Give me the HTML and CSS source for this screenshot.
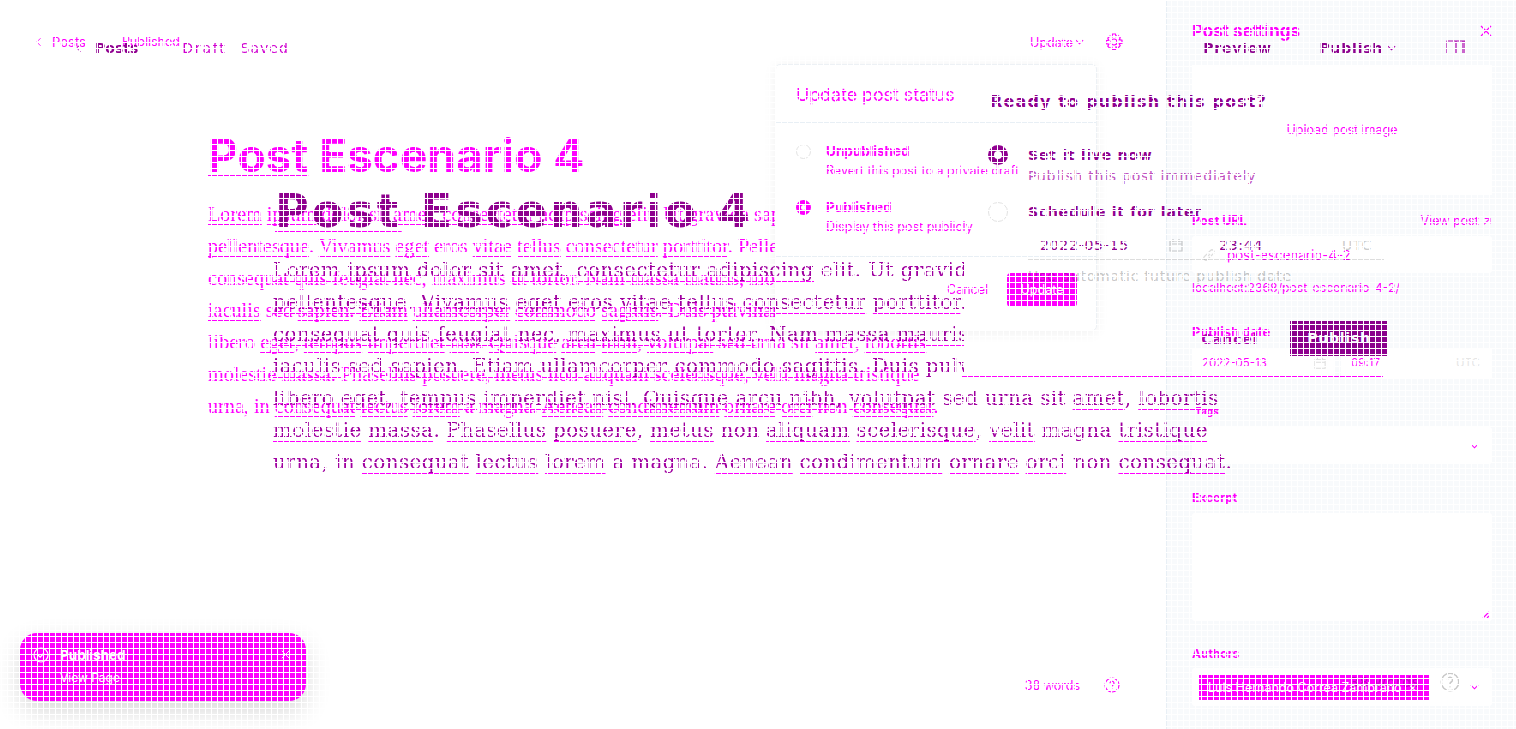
FILE: index.html
```html
<!DOCTYPE html>
<html lang="en">
<head>
    <meta charset="UTF-8">
    <meta name="viewport" content="width=device-width, initial-scale=1.0">
    <title>Post Escenario 4</title>
    <link rel="stylesheet" href="styles.css">
</head>
<body>
    <!-- back layer: settings panel open -->
    <div class="layer layer-a">
        <div class="editor">
            <header class="bar">
                <div class="crumbs">
                    <svg class="ico-back" viewBox="0 0 8 12"><path d="M6 1 1 6l5 5"/></svg>
                    <span class="crumb-link">Posts</span>
                    <span class="crumb-status">Published</span>
                </div>
                <div class="bar-right">
                    <span class="update-link">Update</span>
                    <svg class="ico-chev" viewBox="0 0 10 6"><path d="M1 1l4 4 4-4"/></svg>
                    <svg class="ico-gear" viewBox="0 0 18 18"><circle cx="9" cy="9" r="3"/><path d="M7.500 1h3l.5 2.500 2-1 2.200 2.200-1 2 2.800.5v3l-2.800.5 1 2-2.200 2.200-2-1-.5 2.600h-3L7 14.400l-2 1-2.200-2.200 1-2L1 10.700v-3l2.800-.5-1-2L5 3l2 1z"/></svg>
                </div>
            </header>
            <main class="doc">
                <h1 class="title"><span class="sp">Post</span> Escenario 4</h1>
                <p class="body-text">
                    <span class="sp">Lorem</span> <span class="sp">ipsum</span> dolor sit <span class="sp">amet</span>, <span class="sp">consectetur</span> <span class="sp">adipiscing</span> elit. Ut gravida sapien vitae mi<br>
                    <span class="sp">pellentesque</span>. <span class="sp">Vivamus</span> <span class="sp">eget</span> eros <span class="sp">vitae</span> <span class="sp">tellus</span> <span class="sp">consectetur</span> <span class="sp">porttitor</span>. Pellentesque<br>
                    <span class="sp">consequat</span> quis <span class="sp">feugiat</span> nec, <span class="sp">maximus</span> ut <span class="sp">tortor</span>. Nam massa <span class="sp">mauris</span>, mollis in<br>
                    <span class="sp">iaculis</span> sed <span class="sp">sapien</span>. <span class="sp">Etiam</span> <span class="sp">ullamcorper</span> <span class="sp">commodo</span> <span class="sp">sagittis</span>. Duis pulvinar<br>
                    libero <span class="sp">eget</span>, <span class="sp">tempus</span> <span class="sp">imperdiet</span> <span class="sp">nisl</span>. <span class="sp">Quisque</span> <span class="sp">arcu</span> <span class="sp">nibh</span>, <span class="sp">volutpat</span> sed urna sit <span class="sp">amet</span>, <span class="sp">lobortis</span><br>
                    <span class="sp">molestie</span> <span class="sp">massa</span>. <span class="sp">Phasellus</span> <span class="sp">posuere</span>, <span class="sp">metus</span> non <span class="sp">aliquam</span> <span class="sp">scelerisque</span>, <span class="sp">velit</span> magna <span class="sp">tristique</span><br>
                    urna, in <span class="sp">consequat</span> <span class="sp">lectus</span> <span class="sp">lorem</span> a magna. <span class="sp">Aenean</span> <span class="sp">condimentum</span> <span class="sp">ornare</span> <span class="sp">orci</span> non <span class="sp">consequat</span>.
                </p>
            </main>
            <footer class="words">
                <span>38 words</span>
                <svg class="ico-help" viewBox="0 0 16 16"><circle cx="8" cy="8" r="7"/><path d="M6 6.200a2 2 0 1 1 3 1.800c-.7.400-1 .8-1 1.500M8 11.600v.5"/></svg>
            </footer>
        </div>

        <aside class="panel">
            <div class="panel-head">
                <span class="panel-title">Post settings</span>
                <svg class="ico-x" viewBox="0 0 12 12"><path d="M1 1l10 10M11 1 1 11"/></svg>
            </div>
            <div class="image-box"><span class="image-btn">Upload post image</span></div>

            <div class="label-row url-label"><label>Post URL</label><span class="view-post">View post ↗</span></div>
            <div class="field url-field">
                <svg class="ico-link" viewBox="0 0 14 14"><path d="M6 8l2-2M5 6 2.500 8.500a2 2 0 0 0 3 3L8 9M9 8l2.500-2.500a2 2 0 0 0-3-3L6 5"/></svg>
                <span>post-escenario-4-2</span>
            </div>
            <div class="hint">localhost:2368/post-escenario-4-2/</div>

            <label class="date-label">Publish date</label>
            <div class="date-row">
                <div class="date-part">
                    <span>2022-05-13</span>
                    <svg class="ico-cal" viewBox="0 0 14 14"><path d="M1 3h12v10H1zM1 6h12M4 1v3M10 1v3"/></svg>
                </div>
                <div class="date-part time-part"><span>09:17</span><span class="utc">UTC</span></div>
            </div>

            <label class="tags-label">Tags</label>
            <div class="field tags-field"><svg class="ico-chev" viewBox="0 0 10 6"><path d="M1 1l4 4 4-4"/></svg></div>

            <label class="excerpt-label">Excerpt</label>
            <div class="field excerpt-field"><svg class="ico-grip" viewBox="0 0 8 8"><path d="M1 7l6-6M5 7l2-2"/></svg></div>

            <label class="authors-label">Authors</label>
            <div class="field authors-field">
                <span class="token">Luis Hernando Correa Zambrano &nbsp;×</span>
                <svg class="ico-chev" viewBox="0 0 10 6"><path d="M1 1l4 4 4-4"/></svg>
            </div>
        </aside>

        <div class="status-pop">
            <div class="status-head">Update post status</div>
            <div class="status-list">
                <div class="status-opt">
                    <span class="radio"></span>
                    <div><strong>Unpublished</strong><small>Revert this post to a private draft</small></div>
                </div>
                <div class="status-opt">
                    <span class="radio on"></span>
                    <div><strong>Published</strong><small>Display this post publicly</small></div>
                </div>
            </div>
            <div class="status-foot">
                <span class="foot-cancel">Cancel</span>
                <span class="foot-update">Update</span>
            </div>
        </div>

        <div class="toast">
            <svg class="ico-ok" viewBox="0 0 16 16"><circle cx="8" cy="8" r="7"/><path d="M5 8l2.200 2.200L11 6"/></svg>
            <div class="toast-text"><strong>Published</strong><span>View Page</span></div>
            <svg class="ico-x" viewBox="0 0 12 12"><path d="M1 1l10 10M11 1 1 11"/></svg>
        </div>
    </div>

    <!-- front layer: publish menu open, blended over the back one -->
    <div class="layer layer-b">
        <div class="editor">
            <header class="bar">
                <div class="crumbs">
                    <svg class="ico-back" viewBox="0 0 8 12"><path d="M6 1 1 6l5 5"/></svg>
                    <span class="crumb-link">Posts</span>
                    <span class="crumb-status">Draft</span>
                    <span class="crumb-saved">Saved</span>
                </div>
                <div class="bar-right">
                    <span class="preview-link">Preview</span>
                    <span class="publish-link">Publish</span>
                    <svg class="ico-chev" viewBox="0 0 10 6"><path d="M1 1l4 4 4-4"/></svg>
                    <svg class="ico-side" viewBox="0 0 20 14"><path d="M1 13V1h18v12M10 1v12M17 1v12"/></svg>
                </div>
            </header>
            <main class="doc">
                <h1 class="title"><span class="sp">Post</span> Escenario 4</h1>
                <p class="body-text">
                    <span class="sp">Lorem</span> <span class="sp">ipsum</span> dolor sit <span class="sp">amet</span>, <span class="sp">consectetur</span> <span class="sp">adipiscing</span> elit. Ut gravida sapien vitae mi<br>
                    <span class="sp">pellentesque</span>. <span class="sp">Vivamus</span> <span class="sp">eget</span> eros <span class="sp">vitae</span> <span class="sp">tellus</span> <span class="sp">consectetur</span> <span class="sp">porttitor</span>. Pellentesque<br>
                    <span class="sp">consequat</span> quis <span class="sp">feugiat</span> nec, <span class="sp">maximus</span> ut <span class="sp">tortor</span>. Nam massa <span class="sp">mauris</span>, mollis in<br>
                    <span class="sp">iaculis</span> sed <span class="sp">sapien</span>. <span class="sp">Etiam</span> <span class="sp">ullamcorper</span> <span class="sp">commodo</span> <span class="sp">sagittis</span>. Duis pulvinar<br>
                    libero <span class="sp">eget</span>, <span class="sp">tempus</span> <span class="sp">imperdiet</span> <span class="sp">nisl</span>. <span class="sp">Quisque</span> <span class="sp">arcu</span> <span class="sp">nibh</span>, <span class="sp">volutpat</span> sed urna sit <span class="sp">amet</span>, <span class="sp">lobortis</span><br>
                    <span class="sp">molestie</span> <span class="sp">massa</span>. <span class="sp">Phasellus</span> <span class="sp">posuere</span>, <span class="sp">metus</span> non <span class="sp">aliquam</span> <span class="sp">scelerisque</span>, <span class="sp">velit</span> magna <span class="sp">tristique</span><br>
                    urna, in <span class="sp">consequat</span> <span class="sp">lectus</span> <span class="sp">lorem</span> a magna. <span class="sp">Aenean</span> <span class="sp">condimentum</span> <span class="sp">ornare</span> <span class="sp">orci</span> non <span class="sp">consequat</span>.
                </p>
            </main>
            <footer class="words">
                <span>38 words</span>
                <svg class="ico-help" viewBox="0 0 16 16"><circle cx="8" cy="8" r="7"/><path d="M6 6.200a2 2 0 1 1 3 1.800c-.7.400-1 .8-1 1.500M8 11.600v.5"/></svg>
            </footer>
        </div>

        <div class="publish-pop">
            <div class="publish-head">Ready to publish this post?</div>
            <div class="publish-opt">
                <span class="radio on"></span>
                <div><strong>Set it live now</strong><small>Publish this post immediately</small></div>
            </div>
            <div class="publish-opt">
                <span class="radio"></span>
                <div class="sched">
                    <strong>Schedule it for later</strong>
                    <div class="sched-row">
                        <div class="sched-date">
                            <span>2022-05-15</span>
                            <svg class="ico-cal" viewBox="0 0 14 14"><path d="M1 3h12v10H1zM1 6h12M4 1v3M10 1v3"/></svg>
                        </div>
                        <div class="sched-time"><span>23:44</span><span class="utc">UTC</span></div>
                    </div>
                    <small>Use automatic future publish date</small>
                </div>
            </div>
            <div class="publish-foot">
                <span class="foot-cancel">Cancel</span>
                <span class="foot-publish">Publish</span>
            </div>
        </div>
    </div>
</body>
</html>
```

FILE: styles.css
```css
html, body {
    margin: 0;
    height: 100%;
    overflow: hidden;
    background: #fff;
}

/* the white 6px mesh runs over everything */
body::after {
    content: "";
    position: fixed;
    inset: 0;
    z-index: 10;
    pointer-events: none;
    background-image:
        repeating-linear-gradient(to right, transparent 0, transparent 1px, #fff 1px, #fff 2px, transparent 2px, transparent 6px),
        repeating-linear-gradient(to bottom, #fff 0, #fff 1px, transparent 1px, transparent 6px);
}

.layer {
    position: absolute;
    inset: 0;
    display: flex;
    overflow: hidden;
}

.layer svg {
    fill: none;
    stroke: currentColor;
    stroke-width: 1.2;
    flex: none;
}

.editor {
    flex: 1;
    min-width: 0;
    display: flex;
    flex-direction: column;
}

.bar {
    display: flex;
    justify-content: space-between;
    align-items: center;
}

.crumbs, .bar-right, .words {
    display: flex;
    align-items: center;
}

.doc {
    flex: 1;
    min-width: 0;
    white-space: nowrap;
}

.title {
    margin: 0;
}

.body-text {
    margin: 0;
    line-height: 32px;
}

.sp {
    text-decoration: underline;
    text-decoration-color: #f0f;
    text-decoration-thickness: 1px;
    text-decoration-skip-ink: none;
}

.radio {
    display: block;
    flex: none;
    box-sizing: border-box;
    border-radius: 50%;
    border: 1px solid #e3e3e3;
}

strong, small {
    display: block;
}

/* back layer */
.layer-a {
    color: #f0f;
    font-family: "Inter", sans-serif;
}

.layer-a .bar {
    height: 84px;
    padding: 0 43px 0 36px;
    font-size: 12.500px;
    box-sizing: border-box;
}

.layer-a .ico-back { width: 6px; height: 10px; margin-right: 10px; }
.layer-a .crumb-link { margin-right: 36px; font-size: 13px; }
.layer-a .crumb-status { margin-top: -2px; }
.layer-a .ico-chev { width: 9px; height: 6px; margin-left: 2px; }
.layer-a .ico-gear { width: 18px; height: 18px; margin-left: 21px; }

.layer-a .doc { padding: 45px 0 0 208px; }

.layer-a .title {
    font-size: 46px;
    line-height: 53px;
    font-weight: 700;
    margin-bottom: 16px;
}

.layer-a .title .sp { text-underline-offset: 3px; }

.layer-a .body-text {
    font-family: "Liberation Serif", serif;
    font-size: 20.200px;
}

.layer-a .sp { text-underline-offset: 3px; }

.layer-a .words {
    justify-content: flex-end;
    gap: 24px;
    padding: 0 46px 36px 0;
    font-size: 12.500px;
}

.layer-a .ico-help { width: 16px; height: 16px; }

.panel {
    flex: none;
    width: 350px;
    box-sizing: border-box;
    padding: 20px 24px 0 25px;
    background: #f8fafc;
    border-left: 1px solid #e8eff5;
    font-size: 12px;
    display: flex;
    flex-direction: column;
}

.panel label {
    display: block;
    font-weight: 700;
    line-height: 16px;
    font-size: 13px;
}

.panel-head {
    display: flex;
    justify-content: space-between;
    align-items: center;
    height: 22px;
    margin-bottom: 23px;
}

.panel-title { font-size: 17px; font-weight: 700; }
.panel-head .ico-x { width: 12px; height: 12px; margin-right: 0; }

.image-box {
    height: 130px;
    background: #fff;
    display: flex;
    justify-content: center;
    align-items: center;
    flex: none;
    font-size: 12.500px;
}

.image-btn {
    padding: 8px 12px;
    line-height: 16px;
    border-radius: 4px;
}

.label-row {
    display: flex;
    justify-content: space-between;
    margin-top: 18px;
    line-height: 16px;
    font-size: 12.500px;
}

.label-row label { font-weight: 700; font-size: 12.500px; }

.field {
    box-sizing: border-box;
    background: #fff;
    border-radius: 3px;
    display: flex;
    align-items: center;
}

.url-field {
    height: 37px;
    margin-top: 7px;
    padding-left: 10px;
    gap: 11px;
    font-size: 13.300px;
}

.ico-link { width: 14px; height: 14px; color: #ddd; }

.hint {
    margin-top: 7px;
    line-height: 16px;
    font-size: 12.200px;
}

.panel .date-label { margin-top: 28px; }

.date-row {
    display: flex;
    height: 30px;
    margin-top: 8px;
    gap: 6px;
}

.date-part {
    display: flex;
    align-items: center;
    justify-content: space-between;
    width: 143px;
    box-sizing: border-box;
    padding: 0 10px;
    background: #fff;
    font-size: 11.500px;
}

.time-part { flex: 1; padding-right: 12px; }
.panel .ico-cal { width: 12px; height: 12px; color: #ddd; margin-right: -1px; }
.utc { color: #e6e6e6; }

.panel .tags-label { margin-top: 25px; font-size: 10px; padding-left: 3px; }
.tags-field { height: 37px; margin-top: 8px; justify-content: flex-end; padding-right: 13px; }
.panel .ico-chev { width: 9px; height: 6px; }

.panel .excerpt-label { margin-top: 26px; font-size: 12px; }

.excerpt-field {
    height: 108px;
    margin-top: 7px;
    align-items: flex-end;
    justify-content: flex-end;
    padding: 0 2px 2px 0;
}

.ico-grip { width: 8px; height: 8px; }

.panel .authors-label { margin-top: 25px; font-size: 12px; }
.authors-field { height: 38px; margin-top: 6px; padding: 0 13px 0 7px; justify-content: space-between; }

.token {
    width: 230px;
    height: 25px;
    line-height: 25px;
    box-sizing: border-box;
    padding-left: 9px;
    background: #f0f;
    color: #fff;
    font-size: 12.500px;
    white-space: nowrap;
    overflow: hidden;
}

.status-pop {
    position: absolute;
    left: 775px;
    top: 64px;
    width: 322px;
    height: 267px;
    box-sizing: border-box;
    background: #fff;
    border: 1px solid #edf1f5;
    border-radius: 5px;
    box-shadow: 0 2px 14px rgba(0, 0, 0, .06);
    display: flex;
    flex-direction: column;
}

.status-head {
    height: 57px;
    line-height: 60px;
    flex: none;
    padding-left: 20px;
    font-size: 17.800px;
    border-bottom: 1px solid #e8eff5;
}

.status-list { flex: 1; padding: 18px 20px 0; }

.status-opt {
    display: flex;
    gap: 15px;
    height: 56px;
    white-space: nowrap;
}

.status-opt strong { font-size: 13.500px; line-height: 20px; }
.status-opt small { font-size: 12.500px; line-height: 18px; margin-top: 1px; }
.status-opt .radio { width: 15px; height: 15px; margin-top: 3px; }
.radio.on { border: 5px solid currentColor; }

.status-foot {
    height: 74px;
    flex: none;
    box-sizing: border-box;
    padding: 0 19px 8px 0;
    border-top: 1px solid #e8eff5;
    display: flex;
    justify-content: flex-end;
    align-items: center;
    gap: 19px;
    font-size: 12.500px;
}

.foot-update {
    width: 70px;
    height: 34px;
    line-height: 34px;
    text-align: center;
    background: #f0f;
    color: #fff;
    border-radius: 4px;
}

.toast {
    position: absolute;
    left: 20px;
    top: 633px;
    width: 286px;
    height: 68px;
    box-sizing: border-box;
    padding: 13px 16px 0 13px;
    border-radius: 17px;
    background: #f0f;
    color: #fff;
    box-shadow: 0 10px 26px rgba(0, 0, 0, .16);
    display: flex;
    gap: 11px;
}

.toast .ico-ok { width: 16px; height: 16px; margin-top: 1px; }
.toast .ico-x { width: 9px; height: 9px; margin-top: 4px; margin-left: auto; }
.toast-text strong { font-size: 13.500px; line-height: 18px; }
.toast-text span { display: block; margin-top: 6px; font-size: 12px; line-height: 16px; }

/* front layer */
.layer-b {
    color: #b000b0;
    font-family: "DejaVu Sans", sans-serif;
    letter-spacing: .75px;
    mix-blend-mode: multiply;
}

.layer-b .bar {
    height: 96px;
    padding: 0 50px 0 76px;
    font-size: 14px;
}

.layer-b .ico-back { width: 6px; height: 10px; margin-right: 13px; }
.layer-b .crumb-link { font-weight: 700; letter-spacing: 0; margin-right: 44px; color: #900090; }
.layer-b .crumb-status { margin-right: 14px; letter-spacing: 1.800px; color: #d000d0; }
.layer-b .crumb-saved { letter-spacing: 1px; color: #d000d0; }
.layer-b .preview-link { margin-right: 48px; font-weight: 700; color: #900090; }
.layer-b .publish-link { font-weight: 700; color: #900090; }
.layer-b .bar .ico-chev { width: 9px; height: 6px; margin-left: 4px; }
.layer-b .ico-side { width: 20px; height: 14px; margin-left: 50px; margin-top: -2px; }

.layer-b .doc { padding: 86px 0 0 273px; }

.layer-b .title {
    font-size: 46px;
    line-height: 58px;
    font-weight: 700;
    letter-spacing: 3px;
    color: #8e008e;
    margin: 0 0 14px 2px;
}

.layer-b .body-text {
    font-family: "DejaVu Serif", serif;
    font-size: 20px;
    letter-spacing: .35px;
    color: #a000a0;
}

.layer-b .sp { text-underline-offset: 4px; }

.layer-b .words {
    justify-content: flex-end;
    gap: 20px;
    padding: 0 56px 37px 0;
    color: #c8c8c8;
    font-size: 14px;
}

.layer-b .ico-help { width: 20px; height: 20px; }

.publish-pop {
    position: absolute;
    left: 964px;
    top: 60px;
    width: 440px;
    height: 316px;
    box-sizing: border-box;
    padding: 32px 20px 0 24px;
    background: #fff;
    display: flex;
    flex-direction: column;
}

.publish-pop::after {
    content: "";
    position: absolute;
    left: -2px;
    top: 316px;
    width: 421px;
    height: 1px;
    background: #f0f;
}

.publish-head {
    font-size: 16px;
    font-weight: 700;
    line-height: 20px;
    letter-spacing: 1.150px;
    color: #900090;
    margin: 0 0 33px 2px;
}

.publish-opt {
    display: flex;
    gap: 20px;
    height: 57px;
}

.publish-opt strong { font-size: 14px; line-height: 20px; color: #900090; }
.publish-opt small { font-size: 14px; line-height: 20px; margin-top: 1px; color: #c050c0; }
.publish-opt .radio { width: 20px; height: 20px; color: #900090; }
.publish-opt .radio.on { border-width: 6px; }

.sched { flex: 1; }

.sched-row {
    display: flex;
    height: 28px;
    padding-top: 5px;
    margin: 4px 0 6px;
    border-bottom: 1px solid #ddd;
    align-items: center;
    color: #900090;
    font-size: 14px;
}

.sched-date {
    display: flex;
    width: 155px;
    justify-content: space-between;
    align-items: center;
    padding-left: 12px;
    box-sizing: border-box;
}

.sched-date .ico-cal { width: 14px; height: 14px; color: #ccc; }
.sched-time { display: flex; flex: 1; justify-content: space-between; padding: 0 12px 0 36px; }
.sched-time .utc { color: #ccc; }
.sched small { color: #c8c8c8; margin-top: 0; }

.publish-foot {
    position: absolute;
    right: 16px;
    top: 261px;
    display: flex;
    align-items: center;
    gap: 32px;
    font-size: 14px;
    font-weight: 700;
}

.foot-publish {
    width: 98px;
    height: 35px;
    line-height: 35px;
    text-align: center;
    background: #8e008e;
    color: #fff;
}
```
